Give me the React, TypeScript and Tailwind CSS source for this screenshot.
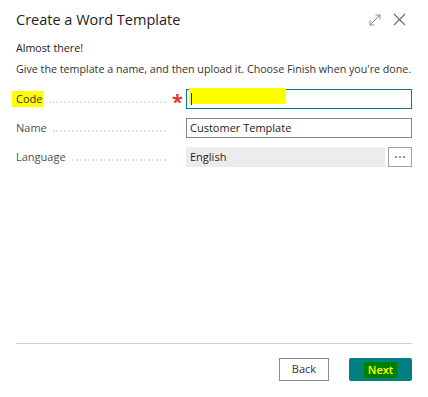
import React from "react";

function Row({
  label,
  required,
  highlight,
  children,
}: {
  label: string;
  required?: boolean;
  highlight?: boolean;
  children: React.ReactNode;
}) {
  return (
    <div className="flex items-center h-[20px]">
      <div className="flex items-center w-[156px]">
        <span className={highlight ? "bg-[#ffff00] text-[#333] pr-[1px] -ml-[4px] pl-[4px]" : "text-[#505050]"}>
          {label}
        </span>
        <span className="flex-1 mx-[6px] border-b-2 border-dotted border-[#e3e3e3] translate-y-[3px]" />
      </div>
      <div className="w-[14px] text-[#e8332a] text-[20px] leading-none font-bold pt-[6px]">
        {required ? "*" : ""}
      </div>
      <div className="flex-1 flex items-stretch h-full">{children}</div>
    </div>
  );
}

export default function App() {
  return (
    <div
      className="w-[428px] h-[397px] bg-white flex flex-col px-4 text-[11px] text-[#212121]"
      style={{ fontFamily: '"Open Sans", "Noto Sans", sans-serif' }}
    >
      <div className="flex items-center justify-between h-[38px] pt-[1px]">
        <h1 className="text-[14.5px] text-[#212121]">Create a Word Template</h1>
        <div className="flex items-center gap-[12px] mr-[6px]">
          <svg width="12" height="12" viewBox="0 0 12 12" fill="none" stroke="#8a8a8a" strokeWidth="1">
            <path d="M1 11 L11 1 M6.5 1 H11 V5.5 M1 6.5 V11 H5.5" />
          </svg>
          <svg width="13" height="13" viewBox="0 0 13 13" fill="none" stroke="#6a6a6a" strokeWidth="1.1">
            <path d="M1 1 L12 12 M12 1 L1 12" />
          </svg>
        </div>
      </div>
      <p className="mt-[2px] font-medium text-[10.7px]">Almost there!</p>
      <p className="mt-[5px] text-[10.7px] text-[#333]">
        Give the template a name, and then upload it. Choose Finish when you&apos;re done.
      </p>
      <div className="flex flex-col gap-[9px] mt-[12px]">
        <Row label="Code" required highlight>
          <div className="flex-1 border border-[#008080] relative">
            <div className="absolute left-[2px] -top-[2px] w-[97px] h-[16px] bg-[#ffff00]" />
            <div className="absolute left-[4px] top-[3px] w-[1px] h-[12px] bg-[#222]" />
          </div>
        </Row>
        <Row label="Name">
          <div className="flex-1 border border-[#8a8a8a] flex items-center px-[3px] text-[#222]">
            Customer Template
          </div>
        </Row>
        <Row label="Language">
          <div className="flex-1 bg-[#ececec] flex items-center px-[4px] text-[#222]">English</div>
          <div className="ml-[3px] w-[24px] border border-[#a0a0a0] flex items-center justify-center gap-[2px] pb-[1px]">
            <span className="w-[2px] h-[2px] bg-[#7a9cc0]" />
            <span className="w-[2px] h-[2px] bg-[#7a9cc0]" />
            <span className="w-[2px] h-[2px] bg-[#7a9cc0]" />
          </div>
        </Row>
      </div>
      <div className="flex-1" />
      <div className="border-t-[1.5px] border-[#cccccc]" />
      <div className="flex justify-end gap-[20px] mt-[14px] mb-[16px]">
        <button className="w-[50px] h-[23px] border border-[#8a8a8a] bg-white text-[#333] text-[11px]">
          Back
        </button>
        <button className="w-[63px] h-[23px] bg-[#008080] rounded-[2px] flex items-center justify-center">
          <span className="bg-[#008000] text-[#ffff00] font-semibold px-[4px] leading-[16px]">Next</span>
        </button>
      </div>
    </div>
  );
}
